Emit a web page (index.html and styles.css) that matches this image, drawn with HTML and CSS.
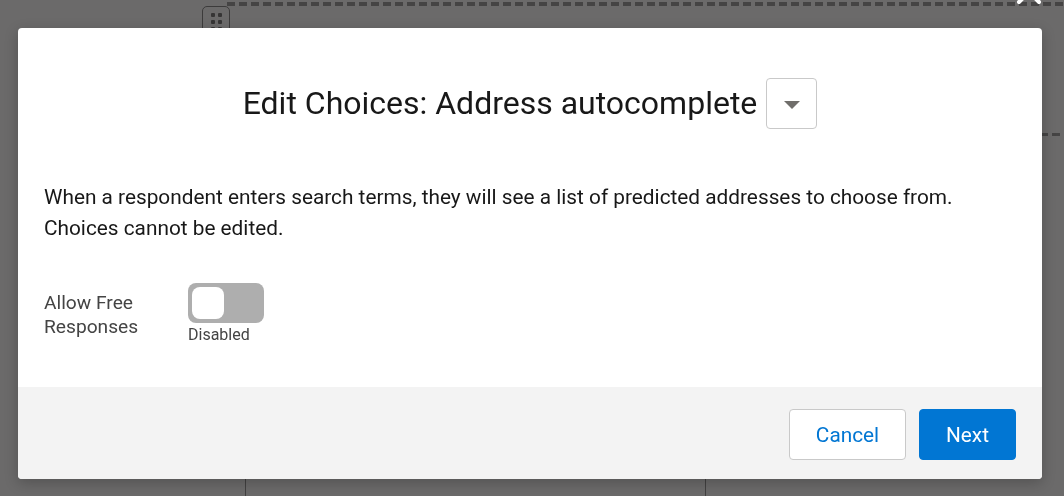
FILE: index.html
```html
<!DOCTYPE html>
<html lang="en">
<head>
<meta charset="utf-8">
<title>Edit Choices</title>
<link rel="stylesheet" href="styles.css">
</head>
<body>
<div class="page">
  <div class="handle">
    <span class="dot"></span><span class="dot"></span>
    <span class="dot"></span><span class="dot"></span>
    <span class="dot"></span><span class="dot"></span>
  </div>
  <div class="dash-top"></div>
  <div class="dash-right"></div>
  <div class="vline vline-a"></div>
  <div class="vline vline-b"></div>
</div>
<div class="backdrop"></div>
<section class="modal" role="dialog">
  <button class="close" aria-label="Close">
    <svg viewBox="0 0 26 26" width="26" height="26"><path d="M3 3 L23 23 M23 3 L3 23" stroke="#fff" stroke-width="4" stroke-linecap="round" fill="none"/></svg>
  </button>
  <header class="modal-header">
    <h2 class="title">Edit Choices: Address autocomplete</h2>
    <button class="menu-btn" aria-label="More">
      <svg viewBox="0 0 16 8" width="16" height="8"><path d="M0 0 H16 L8 8 Z" fill="#706e6b"/></svg>
    </button>
  </header>
  <div class="modal-body">
    <p class="desc">When a respondent enters search terms, they will see a list of predicted addresses to choose from. Choices cannot be edited.</p>
    <div class="field">
      <div class="field-label">Allow Free Responses</div>
      <div class="toggle-wrap">
        <span class="toggle"><span class="knob"></span></span>
        <span class="toggle-text">Disabled</span>
      </div>
    </div>
  </div>
  <footer class="modal-footer">
    <button class="btn btn-neutral">Cancel</button>
    <button class="btn btn-brand">Next</button>
  </footer>
</section>
</body>
</html>
```

FILE: styles.css
```css
html, body {
  margin: 0;
  padding: 0;
  width: 1064px;
  height: 496px;
  overflow: hidden;
  background: #ffffff;
  font-family: Roboto, "Liberation Sans", sans-serif;
}

.page {
  position: relative;
  width: 1064px;
  height: 496px;
}

.handle {
  position: absolute;
  left: 202px;
  top: 6px;
  width: 28px;
  height: 40px;
  border: 1px solid #8a8a8a;
  border-radius: 5px;
  display: grid;
  grid-template-columns: 4px 4px;
  grid-auto-rows: 4px;
  gap: 3px;
  justify-content: center;
  padding-top: 6px;
  box-sizing: border-box;
}

.dot {
  background: #7a7a7a;
  border-radius: 1px;
}

.dash-top {
  position: absolute;
  left: 227px;
  right: 0;
  top: 2px;
  height: 4px;
  background: repeating-linear-gradient(90deg, #a0a0a0 0 8px, transparent 8px 12px);
}

.dash-right {
  position: absolute;
  left: 1040px;
  right: 0;
  top: 133px;
  height: 3px;
  background: repeating-linear-gradient(90deg, #a0a0a0 0 8px, transparent 8px 12px);
}

.vline {
  position: absolute;
  top: 440px;
  bottom: 0;
  width: 1px;
  background: #9a9a9a;
}
.vline-a { left: 245px; }
.vline-b { left: 705px; }

.backdrop {
  position: fixed;
  inset: 0;
  background: rgba(8, 7, 7, 0.6);
}

.modal {
  position: absolute;
  left: 18px;
  top: 28px;
  width: 1024px;
  height: 451px;
  background: #ffffff;
  border-radius: 4px;
  box-shadow: 0 4px 14px rgba(0, 0, 0, 0.22);
  display: flex;
  flex-direction: column;
}

.close {
  position: absolute;
  top: -49px;
  right: 0;
  width: 26px;
  height: 26px;
  padding: 0;
  border: 0;
  background: transparent;
}
.close svg { display: block; }

.modal-header {
  display: flex;
  justify-content: center;
  align-items: center;
  gap: 9px;
  padding-top: 50px;
}

.title {
  margin: 0;
  font-size: 32px;
  font-weight: 400;
  color: #181818;
  line-height: 51px;
}

.menu-btn {
  width: 51px;
  height: 51px;
  box-sizing: border-box;
  border: 1px solid #c9c9c9;
  border-radius: 4px;
  background: #ffffff;
  display: flex;
  align-items: center;
  justify-content: center;
  padding: 0;
}
.menu-btn svg { display: block; margin-top: 2px; }

.modal-body {
  flex: 1;
  padding: 52.5px 26px 0 26px;
}

.desc {
  margin: 0;
  font-size: 20.8px;
  line-height: 31.2px;
  color: #181818;
}

.field {
  display: flex;
  margin-top: 39.5px;
}

.field-label {
  width: 144px;
  padding-top: 8px;
  font-size: 19.2px;
  line-height: 24px;
  color: #444444;
}

.toggle-wrap {
  display: flex;
  flex-direction: column;
  align-items: flex-start;
}

.toggle {
  width: 76px;
  height: 40px;
  box-sizing: border-box;
  background: #aeaeae;
  border-radius: 8px;
  padding: 3px;
  display: flex;
}

.knob {
  width: 32px;
  height: 32px;
  margin-top: 1px;
  margin-left: 1px;
  background: #ffffff;
  border-radius: 8px;
}

.toggle-text {
  margin-top: 2px;
  font-size: 16px;
  line-height: 20px;
  color: #444444;
}

.modal-footer {
  background: #f3f3f3;
  height: 92px;
  box-sizing: border-box;
  padding: 22px 26px 0 0;
  display: flex;
  justify-content: flex-end;
  align-items: flex-start;
  gap: 13px;
  border-radius: 0 0 4px 4px;
}

.btn {
  height: 51px;
  box-sizing: border-box;
  border-radius: 4px;
  font-family: Roboto, "Liberation Sans", sans-serif;
  font-size: 20.8px;
  padding: 0;
}

.btn-neutral {
  width: 117px;
  background: #ffffff;
  border: 1px solid #c9c9c9;
  color: #0176d3;
}

.btn-brand {
  width: 97px;
  background: #0176d3;
  border: 1px solid #0176d3;
  color: #ffffff;
}
```
